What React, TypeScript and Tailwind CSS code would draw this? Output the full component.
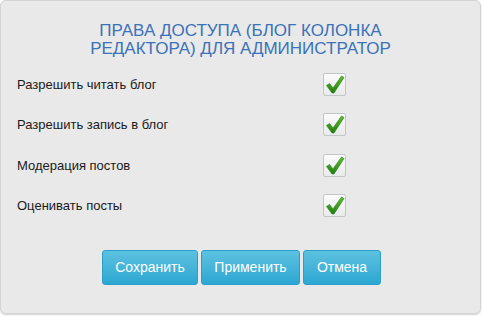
import React from 'react'

const perms = [
  'Разрешить читать блог',
  'Разрешить запись в блог',
  'Модерация постов',
  'Оценивать посты'
]

const buttons = [
  { label: 'Сохранить', w: 'w-[96px]' },
  { label: 'Применить', w: 'w-[99px]' },
  { label: 'Отмена', w: 'w-[78px]' }
]

function Check() {
  return (
    <div className="w-[23px] h-[23px] border border-[#c3c6c9] rounded-[2px] bg-gradient-to-b from-[#fbfbfb] to-[#e9eaea] flex items-center justify-center">
      <svg width="21" height="21" viewBox="0 0 21 21">
        <defs>
          <linearGradient id="ck" x1="0" y1="0" x2="0" y2="1">
            <stop offset="0" stopColor="#5fc22c" />
            <stop offset="1" stopColor="#1f7d10" />
          </linearGradient>
        </defs>
        <path
          d="M2.5 11.5 L5.5 9.5 L9 14 L17.5 2 L20 3.5 L10 19 L8 19 Z"
          fill="url(#ck)"
          stroke="#2a7a18"
          strokeWidth="0.6"
          strokeLinejoin="round"
        />
      </svg>
    </div>
  )
}

export default function App() {
  return (
    <div className="w-[482px] h-[316px] bg-white font-['Liberation_Sans',Arial,sans-serif]">
      <div className="w-[481px] h-[314px] bg-[#e9e9e9] border border-[#d4d4d4] rounded-[6px] shadow-[0_1px_2px_rgba(0,0,0,0.18)] flex flex-col">
        <h1 className="pt-[21px] text-center text-[17px] leading-[18px] text-[#3b72b8] uppercase">
          Права доступа (Блог Колонка
          <br />
          редактора) для Администратор
        </h1>

        <div className="mt-[6px] flex flex-col">
          {perms.map((p) => (
            <div key={p} className="h-[40.5px] flex items-center pl-[16px]">
              <span className="w-[306px] text-[13px] text-[#1a1a1a]">{p}</span>
              <Check />
            </div>
          ))}
        </div>

        <div className="mt-[24px] flex justify-center gap-[3px] pl-[2px]">
          {buttons.map((b) => (
            <button
              key={b.label}
              className={`${b.w} h-[35px] rounded-[3px] border border-[#2d9ec9] bg-gradient-to-b from-[#5cc1e0] to-[#2aa7d2] text-white text-[14px]`}
            >
              {b.label}
            </button>
          ))}
        </div>
      </div>
    </div>
  )
}
